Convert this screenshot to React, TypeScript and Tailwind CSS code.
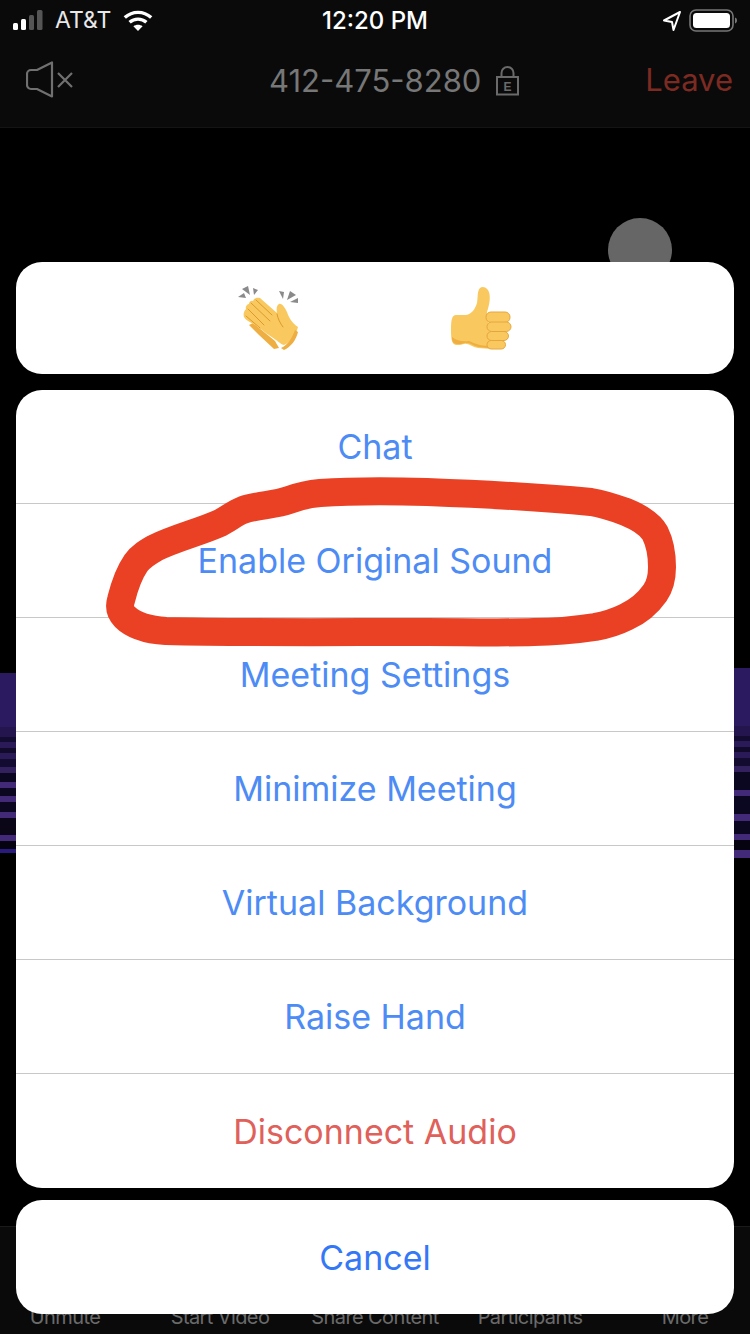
import React from "react";

const font = { fontFamily: '"Inter", "Liberation Sans", sans-serif' };

const menuItems = [
  "Chat",
  "Enable Original Sound",
  "Meeting Settings",
  "Minimize Meeting",
  "Virtual Background",
  "Raise Hand",
];

const toolbarItems = ["Unmute", "Start Video", "Share Content", "Participants", "More"];

// video background bleeding past the sheet: [height, colour]
const leftBands: [number, string][] = [
  [54, "#2c1a60"], [10, "#24154f"], [5, "#140c30"], [6, "#2a1a58"], [5, "#120a2a"], [6, "#2a1a58"], [8, "#140c30"],
  [6, "#33205f"], [9, "#0c0720"], [6, "#432a78"], [8, "#0c0720"], [6, "#432a78"], [10, "#0c0720"], [6, "#432a78"],
  [17, "#0a0618"], [6, "#432a78"], [8, "#050310"], [4, "#2a1a80"],
];
const rightBands: [number, string][] = [
  [58, "#2c1a60"], [10, "#24154f"], [5, "#140c30"], [6, "#2a1a58"], [5, "#120a2a"], [6, "#2a1a58"], [8, "#140c30"],
  [6, "#33205f"], [18, "#0c0720"], [6, "#432a78"], [18, "#0c0720"], [7, "#432a78"], [13, "#0c0720"], [6, "#432a78"],
  [10, "#050310"], [8, "#432a78"],
];

const Signal = () => (
  <svg width="34" height="22" viewBox="0 0 34 22">
    <rect x="0" y="13" width="5" height="7" rx="1.5" fill="#fff" />
    <rect x="8" y="9" width="5" height="11" rx="1.5" fill="#fff" />
    <rect x="16" y="5" width="5" height="15" rx="1.5" fill="#555" />
    <rect x="24" y="0" width="5.5" height="20" rx="1.5" fill="#555" />
  </svg>
);

const Wifi = () => (
  <svg width="30" height="22" viewBox="0 0 30 22" fill="none" stroke="#fff" strokeWidth="3.4">
    <path d="M1.8 7.5C9.4 .6 20.6 .6 28.2 7.5" />
    <path d="M6.6 12.3c4.8-4.2 12-4.2 16.8 0" />
    <path d="M15 21l-4.6-4.8c2.6-2 6.6-2 9.2 0z" fill="#fff" stroke="none" />
  </svg>
);

const LocationArrow = () => (
  <svg width="20" height="22" viewBox="0 0 20 22" fill="none" stroke="#fff" strokeWidth="2" strokeLinejoin="round">
    <path d="M18 2L2 10.5l8 1.5 1.5 8z" />
  </svg>
);

const Battery = () => (
  <svg width="49" height="24" viewBox="0 0 49 24">
    <rect x="1" y="1" width="43" height="21" rx="6" fill="none" stroke="#777" strokeWidth="1.6" />
    <rect x="4" y="4" width="37" height="15" rx="3.5" fill="#fff" />
    <path d="M46 8.5c1.4.4 2 1.6 2 3s-.6 2.6-2 3z" fill="#777" />
  </svg>
);

const MutedSpeaker = () => (
  <svg width="48" height="38" viewBox="0 0 48 38" fill="none" stroke="#707070" strokeLinejoin="round">
    <path d="M5 9h6L26 1.500v34L11 28H5a4 4 0 0 1-4-4V13a4 4 0 0 1 4-4z" strokeWidth="2.200" />
    <path d="M32 12l14 14M46 12L32 26" strokeWidth="2.200" />
  </svg>
);

const EncryptedLock = () => (
  <svg width="23" height="30" viewBox="0 0 23 30" fill="none" stroke="#6a6a6a" strokeWidth="2">
    <path d="M5.500 11V7a6 6 0 0 1 12 0v4" />
    <rect x="1" y="11" width="21" height="17.500" />
    <text x="11.500" y="25" textAnchor="middle" fontSize="12" fontWeight="700" fill="#6a6a6a" stroke="none" fontFamily="Liberation Sans">E</text>
  </svg>
);

const ClapEmoji = () => (
  <svg width="64" height="66" viewBox="236 286 64 66">
    <g fill="#8a8a8a">
      <path d="M237 298l6-4 2 5z" />
      <path d="M241 290l6-3 2 9z" />
      <path d="M252 289l5 2-4 5z" />
      <path d="M278 292l5 1-1 7z" />
      <path d="M289 292l6 4-9 5z" />
      <path d="M297 304l-8-1 8-4z" />
    </g>
    <path d="M258 336l-10-10 4-2 22 18 4 7-5 1z" fill="#eeae41" />
    <path d="M243 318c-1-3 0-6 2-8-1-2 1-5 3-5 0-2 2-4 4-3 1-3 4-4 7-3l17 15c-1-5 0-8 2-9 3-1 6 4 8 8 2 6 5 11 11 15-2 8-7 15-14 18-2 0-5-3-8-5-6-4-13-9-19-14-5-3-11-5-13-9z" fill="#f9c95f" />
    <g fill="none" stroke="#dc9a2e" strokeWidth="1" strokeLinecap="round">
      <path d="M250 304l19 18" />
      <path d="M255 301l16 15" />
      <path d="M247 310l16 16" />
      <path d="M245 317l14 12" />
      <path d="M276 315c1 5 3 9 6 13" />
    </g>
    <path d="M297 333c-2 8-7 15-14 18l-3-2c7-3 11-10 14-18z" fill="#eeae41" />
  </svg>
);

const ThumbEmoji = () => (
  <svg width="66" height="68" viewBox="448 285 66 68">
    <path d="M456 316h10c6-1 9-6 11-12 1-5 0-12 3-15 2-2 6-1 8 2 3 5 2 13-1 22l5 37-14-1c-6-1-10-5-14-4-3 1-5 1-8 1-4-1-5-5-5-15s1-15 5-15z" fill="#f9c95f" />
    <path d="M452 338c0 4 1 7 5 7 3 0 5 0 8-1 4-1 8 3 14 4l10 1v-2c-9 0-15-3-20-5-6 1-12 0-17-4z" fill="#eeae41" />
    <g fill="#f9c95f" stroke="#e6a63c" strokeWidth="1">
      <rect x="486" y="313" width="24" height="10.500" rx="5" />
      <rect x="487" y="323" width="24" height="9.500" rx="4.700" />
      <rect x="487" y="332.500" width="21.500" height="9" rx="4.500" />
      <rect x="487" y="341.500" width="18.500" height="8.500" rx="4.200" />
    </g>
  </svg>
);

// pen circle drawn around the second row
const Scribble = () => (
  <svg className="absolute left-0 top-0" width="750" height="1334" viewBox="0 0 750 1334" fill="none">
    <path
      d="M121 600C124 588 129 573 136 563C141 556 148 552 155 548C175 538 200 532 220 523C228 519 235 513 243 510C258 505 275 505 289 500C300 496 308 494 320 493C350 491 390 491 427 492C480 494 540 497 591 502C604 504 615 508 626 512C638 517 650 524 655 533C661 545 662 556 662 567C662 578 660 586 655 593C648 603 637 612 626 617C616 622 606 625 595 627C575 630 555 632 534 632C500 633 460 632 427 632C340 632 250 633 166 631C150 630 134 626 125 617C120 612 119 607 121 600Z"
      stroke="#ea4125"
      strokeWidth="28"
      strokeLinejoin="round"
    />
  </svg>
);

const VideoBleed = ({ bands, className }: { bands: [number, string][]; className: string }) => (
  <div className={className}>
    {bands.map(([height, color], i) => (
      <div key={i} className="blur-[0.5px]" style={{ height, backgroundColor: color }} />
    ))}
  </div>
);

export default function App() {
  return (
    <div className="relative flex h-[1334px] w-[750px] flex-col overflow-hidden bg-black" style={font}>
      <header className="h-[128px] border-b border-[#141414] bg-[#0a0a0a]">
        <div className="relative flex h-[41px] items-center px-[13px] text-white">
          <Signal />
          <span className="ml-2 text-[23px] leading-none text-[#e8e8e8]">AT&amp;T</span>
          <span className="ml-3 flex"><Wifi /></span>
          <span className="absolute left-0 right-0 text-center text-[24px] font-medium leading-none">12:20 PM</span>
          <span className="ml-auto mr-[7px] flex"><LocationArrow /></span>
          <span className="mr-[-1px] flex"><Battery /></span>
        </div>
        <div className="relative mt-[20px] flex items-center justify-between pl-[26px] pr-[17px]">
          <MutedSpeaker />
          <div className="absolute left-[269px] top-[1px] flex items-center gap-[15px]">
            <span className="text-[31px] leading-[38px] text-[#777777]">412-475-8280</span>
            <EncryptedLock />
          </div>
          <span className="text-[31px] leading-[38px] text-[#7c2a22]">Leave</span>
        </div>
      </header>

      <main className="relative flex-1">
        <div className="absolute left-[608px] top-[90px] h-[64px] w-[64px] rounded-full bg-[#666666]" />
        <VideoBleed bands={leftBands} className="absolute left-0 top-[545px] w-[16px]" />
        <VideoBleed bands={rightBands} className="absolute right-0 top-[540px] w-[16px]" />
      </main>

      <footer className="flex h-[108px] items-end justify-center overflow-hidden border-t border-[#1a1a1a] bg-[#0a0a0a] pb-[5px]">
        {toolbarItems.map((label) => (
          <span key={label} className="w-[155px] shrink-0 text-center text-[20px] leading-[24px] tracking-[-0.6px] text-[#6a6a6a]">
            {label}
          </span>
        ))}
      </footer>

      <div className="absolute inset-x-[16px] bottom-[20px] flex flex-col">
        <div className="flex h-[112px] items-center justify-center gap-[147px] rounded-[26px] bg-white">
          <ClapEmoji />
          <ThumbEmoji />
        </div>
        <div className="mt-[16px] overflow-hidden rounded-[26px] bg-white">
          {menuItems.map((item) => (
            <div key={item} className="flex h-[114px] items-center justify-center border-b border-[#c8c8c8] text-[34px] text-[#4d8bf5]">
              {item}
            </div>
          ))}
          <div className="flex h-[114px] items-center justify-center text-[34px] text-[#e0605a]">
            Disconnect Audio
          </div>
        </div>
        <div className="mt-[12px] flex h-[114px] items-center justify-center rounded-[26px] bg-white text-[34px] text-[#3478f6]">
          Cancel
        </div>
      </div>

      <Scribble />
    </div>
  );
}
